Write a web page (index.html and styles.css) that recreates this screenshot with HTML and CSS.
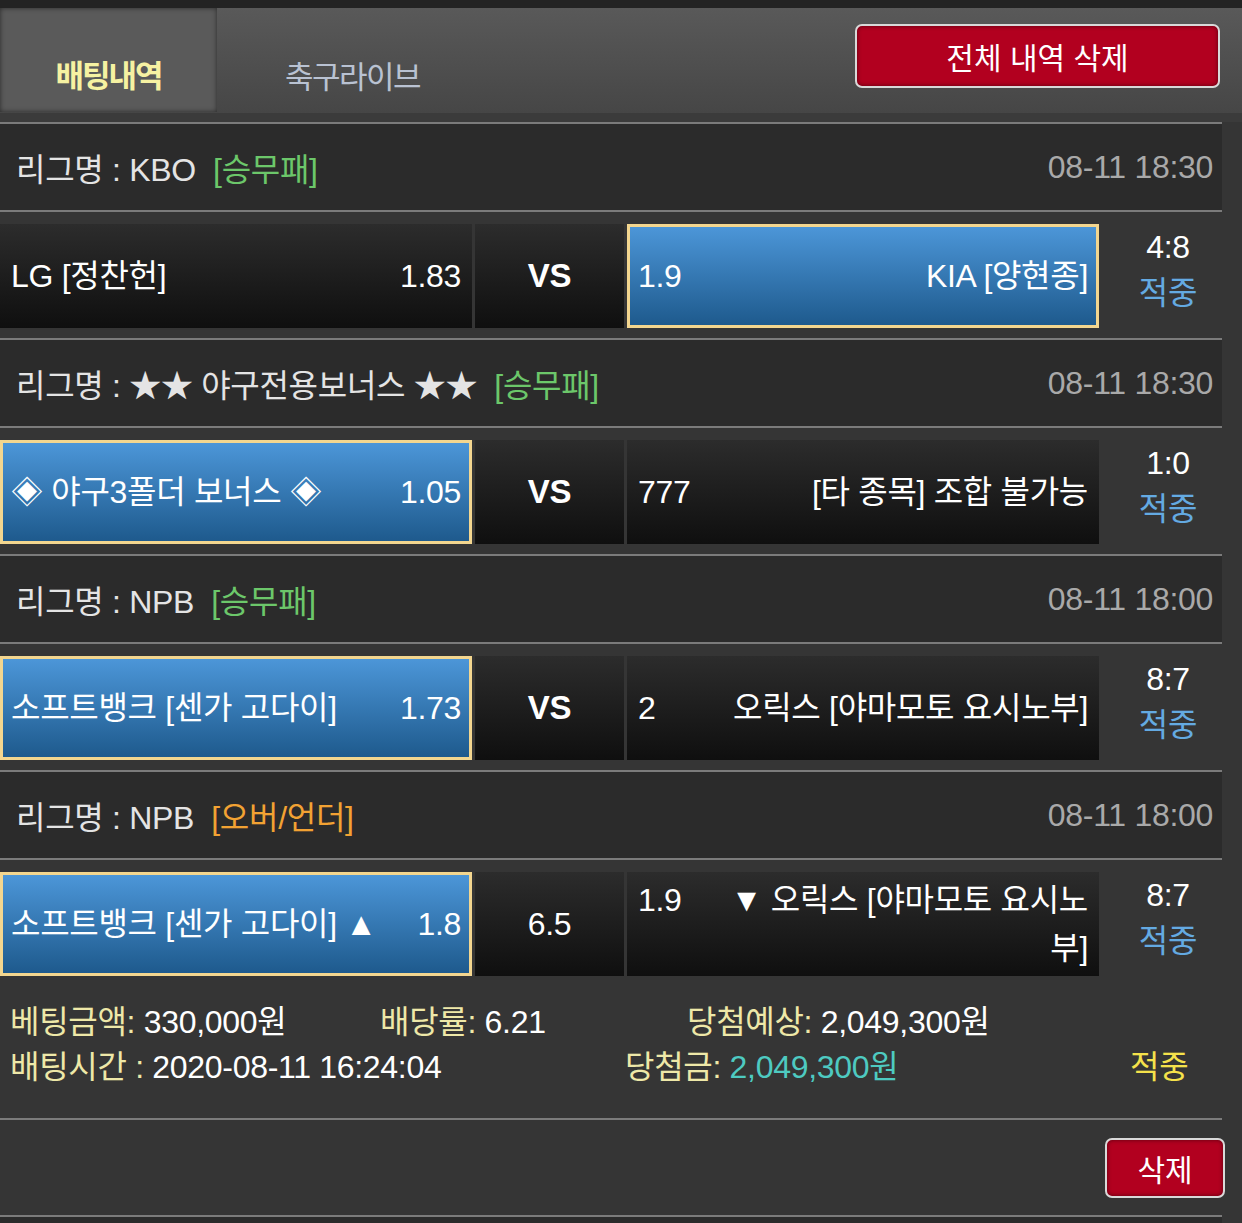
FILE: index.html
```html
<!DOCTYPE html>
<html lang="ko">

<head>
    <meta charset="UTF-8">
    <meta name="viewport" content="width=device-width, initial-scale=1.0">
    <title>배팅내역</title>
    <link rel="stylesheet" href="styles.css">
</head>

<body>
    <div class="topbar"></div>

    <!-- Tabs -->
    <nav class="tabs">
        <div class="tab active">배팅내역</div>
        <div class="tab">축구라이브</div>
        <button class="btn-red btn-all">전체 내역 삭제</button>
    </nav>
    <div class="tabs-gap"></div>

    <!-- Bet slip -->
    <section class="bet">
        <div class="league">
            <div>리그명 : KBO&nbsp; <span class="type-win">[승무패]</span></div>
            <div class="date">08-11 18:30</div>
        </div>
        <div class="match">
            <div class="cell home"><div class="line"><span class="name">LG [정찬헌]</span><span class="odds">1.83</span></div></div>
            <div class="cell mid bold">VS</div>
            <div class="cell away picked"><div class="line"><span class="odds">1.9</span><span class="name">KIA [양현종]</span></div></div>
            <div class="score"><span>4:8</span><span class="hit">적중</span></div>
        </div>

        <div class="league">
            <div>리그명 : ★★ 야구전용보너스 ★★&nbsp; <span class="type-win">[승무패]</span></div>
            <div class="date">08-11 18:30</div>
        </div>
        <div class="match">
            <div class="cell home picked"><div class="line"><span class="name">◈ 야구3폴더 보너스 ◈</span><span class="odds">1.05</span></div></div>
            <div class="cell mid bold">VS</div>
            <div class="cell away"><div class="line"><span class="odds">777</span><span class="name">[타 종목] 조합 불가능</span></div></div>
            <div class="score"><span>1:0</span><span class="hit">적중</span></div>
        </div>

        <div class="league">
            <div>리그명 : NPB&nbsp; <span class="type-win">[승무패]</span></div>
            <div class="date">08-11 18:00</div>
        </div>
        <div class="match">
            <div class="cell home picked"><div class="line"><span class="name">소프트뱅크 [센가 고다이]</span><span class="odds">1.73</span></div></div>
            <div class="cell mid bold">VS</div>
            <div class="cell away"><div class="line"><span class="odds">2</span><span class="name">오릭스 [야마모토 요시노부]</span></div></div>
            <div class="score"><span>8:7</span><span class="hit">적중</span></div>
        </div>

        <div class="league">
            <div>리그명 : NPB&nbsp; <span class="type-ou">[오버/언더]</span></div>
            <div class="date">08-11 18:00</div>
        </div>
        <div class="match">
            <div class="cell home picked"><div class="line"><span class="name">소프트뱅크 [센가 고다이] ▲</span><span class="odds">1.8</span></div></div>
            <div class="cell mid">6.5</div>
            <div class="cell away"><div class="line"><span class="odds">1.9</span><span class="name">▼ 오릭스 [야마모토 요시노부]</span></div></div>
            <div class="score"><span>8:7</span><span class="hit">적중</span></div>
        </div>

        <!-- Summary -->
        <div class="summary">
            <div class="sum-row row-1">
                <div><span class="label">베팅금액:</span> 330,000원</div>
                <div><span class="label">배당률:</span> 6.21</div>
                <div><span class="label">당첨예상:</span> 2,049,300원</div>
            </div>
            <div class="sum-row row-2">
                <div><span class="label">배팅시간 :</span> 2020-08-11 16:24:04</div>
                <div><span class="label">당첨금:</span> <span class="won">2,049,300원</span></div>
                <div class="result">적중</div>
            </div>
        </div>

        <div class="actions">
            <button class="btn-red btn-del">삭제</button>
        </div>
        <div class="next"></div>
    </section>
</body>

</html>
```

FILE: styles.css
```css
/* Basic reset */
* {
    margin: 0;
    padding: 0;
    box-sizing: border-box;
}

body {
    font-family: 'Liberation Sans', 'Noto Sans CJK KR', sans-serif;
    font-size: 32px;
    letter-spacing: -0.3px;
    background-color: #353535;
    color: #fff;
    width: 1242px;
    overflow: hidden;
}

.topbar {
    height: 8px;
    background-color: #232323;
}

/* Tabs */
.tabs {
    display: flex;
    height: 105px;
    background: linear-gradient(#595959, #464646);
}

.tab {
    display: flex;
    align-items: flex-end;
    padding: 0 0 19px 68px;
    line-height: 38px;
    color: #b9c2d2;
    font-family: 'Noto Sans CJK KR', sans-serif;
    font-size: 31px;
    letter-spacing: -1.5px;
}

.tab.active {
    width: 217px;
    height: 104px;
    justify-content: center;
    padding-left: 0;
    background-color: #5a5a5a;
    box-shadow: inset 0 0 5px rgba(0, 0, 0, 0.55);
    color: #f6f2a2;
    font-weight: bold;
    letter-spacing: -2px;
}

.btn-red {
    background-color: #b2001f;
    color: #fff;
    border: 2px solid #d9d9d9;
    border-radius: 7px;
    box-shadow: inset 0 0 4px rgba(0, 0, 0, 0.5);
    font-family: 'Noto Sans CJK KR', sans-serif;
    font-size: 30px;
    cursor: pointer;
}

.btn-all {
    margin: 16px 22px 0 auto;
    width: 365px;
    height: 64px;
}

.tabs-gap {
    height: 9px;
    background-color: #3b3b3b;
}

/* Bet list */
.bet {
    width: 1222px;
}

.league {
    display: flex;
    justify-content: space-between;
    align-items: center;
    height: 88px;
    padding: 0 9px 0 16px;
    background-color: #2b2b2b;
    border-top: 2px solid #7b7b7b;
    color: #e4e4e4;
}

.type-win {
    color: #6cc76a;
}

.type-ou {
    color: #f2a233;
}

.date {
    color: #a9a9a9;
}

.match {
    display: grid;
    grid-template-columns: 472px 149px 472px 1fr;
    column-gap: 3px;
    height: 128px;
    padding: 12px 0 10px;
    border-top: 2px solid #7b7b7b;
}

.cell {
    display: flex;
    align-items: center;
    padding: 0 8px;
    border: 3px solid transparent;
    background: linear-gradient(#2c2c2c, #0f0f0f);
    background-origin: border-box;
    line-height: 48px;
}

.cell.picked {
    border-color: #f3d68f;
    background: linear-gradient(#4c96d8, #1e5a8d);
}

.line {
    display: flex;
    justify-content: space-between;
    align-items: baseline;
    width: 100%;
}

.away .name {
    max-width: 385px;
    text-align: right;
}

.mid {
    justify-content: center;
    border: none;
}

.bold {
    font-weight: bold;
    font-size: 33px;
}

.score {
    display: flex;
    flex-direction: column;
    align-items: center;
    line-height: 46px;
    padding-left: 12px;
}

.hit {
    color: #64aae2;
}

/* Summary */
.summary {
    padding: 14px 0 28px 10px;
    line-height: 45px;
}

.sum-row {
    display: grid;
}

.row-1 {
    grid-template-columns: 370px 307px 1fr;
}

.row-2 {
    grid-template-columns: 615px 505px 1fr;
}

.label {
    color: #eee8a8;
}

.won {
    color: #4ecac1;
}

.result {
    color: #f5e24b;
}

.actions {
    display: flex;
    justify-content: flex-end;
    align-items: center;
    height: 97px;
    border-top: 2px solid #7b7b7b;
}

.btn-del {
    width: 120px;
    height: 60px;
    margin-right: -3px;
}

.next {
    height: 20px;
    background-color: #2b2b2b;
    border-top: 2px solid #7b7b7b;
}
```
